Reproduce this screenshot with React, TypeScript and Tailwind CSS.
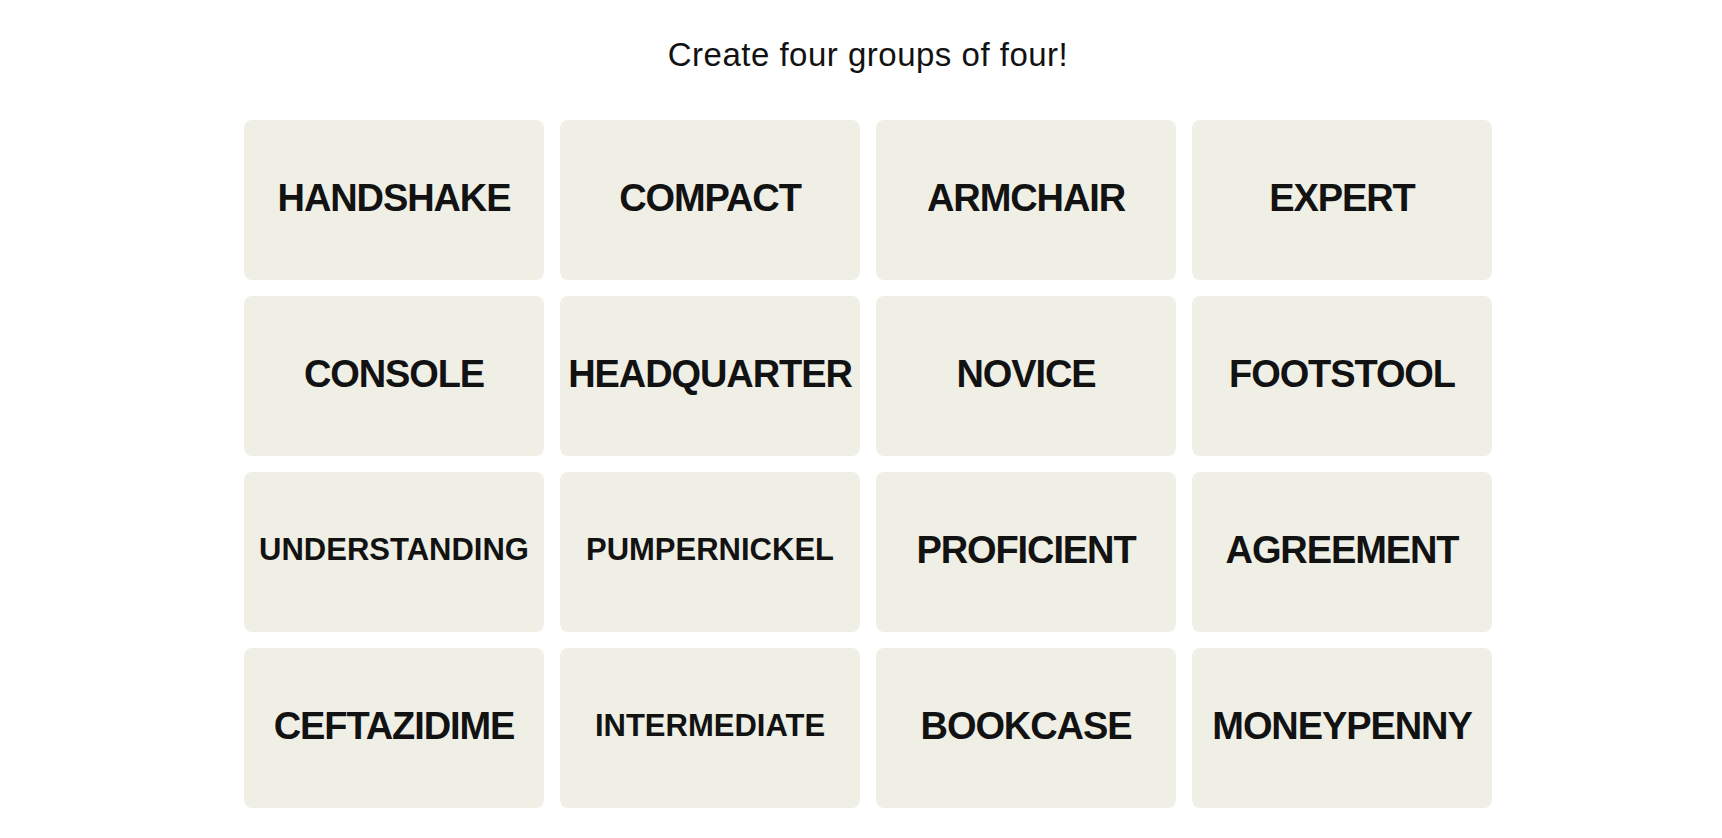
import React from 'react';

const words = [
  'HANDSHAKE', 'COMPACT', 'ARMCHAIR', 'EXPERT',
  'CONSOLE', 'HEADQUARTER', 'NOVICE', 'FOOTSTOOL',
  'UNDERSTANDING', 'PUMPERNICKEL', 'PROFICIENT', 'AGREEMENT',
  'CEFTAZIDIME', 'INTERMEDIATE', 'BOOKCASE', 'MONEYPENNY',
];

// long words get the smaller size, like the auto-fit in the original
const small = ['UNDERSTANDING', 'PUMPERNICKEL', 'INTERMEDIATE'];

const App = () => {
  return (
    <div
      className="min-h-screen bg-white pl-[14px] text-[#121212]"
      style={{ fontFamily: '"Liberation Sans", Arial, sans-serif' }}
    >
      <div className="mx-auto flex w-[1248px] flex-col items-center">
        <h1 className="pt-[35px] text-[33px] font-normal leading-[40px] tracking-[0.5px]">
          Create four groups of four!
        </h1>

        <div className="mt-[45px] grid w-full grid-cols-4 gap-4">
          {words.map((w) => (
            <button
              key={w}
              className="flex h-[160px] items-center justify-center rounded-[8px] bg-[#efefe6] pb-[3px]"
            >
              <span
                className={
                  small.includes(w)
                    ? 'text-[31px] font-bold tracking-normal'
                    : 'text-[38px] font-bold tracking-[-1.1px]'
                }
              >
                {w}
              </span>
            </button>
          ))}
        </div>
      </div>
    </div>
  );
};

export default App;
